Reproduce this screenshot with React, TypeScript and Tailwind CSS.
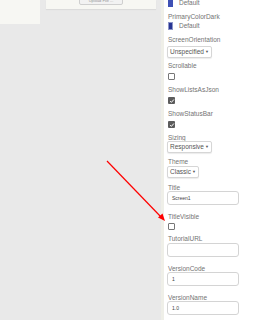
import type { ReactNode } from 'react';

const font = { fontFamily: '"Liberation Sans", Arial, sans-serif' };

function Label({ children }: { children: ReactNode }) {
	return <div className="h-[8px] text-[6.5px] leading-[8px] text-[#737373]">{children}</div>;
}

function Swatch({ color }: { color: string }) {
	return (
		<div className="flex h-[8px] items-center gap-[6px]">
			<span className={`block h-[8px] w-[5px] border border-[#8e96c8] ${color}`} />
			<span className="text-[6.5px] leading-[8px] text-[#737373]">Default</span>
		</div>
	);
}

function Select({ value, width }: { value: string; width: string }) {
	return (
		<div
			className={`flex h-[12px] items-center justify-between rounded-[2px] border border-[#d6d6d6] bg-white pl-[2px] pr-[2px] text-[6.5px] leading-[8px] text-[#555] shadow-[0_1px_1px_rgba(0,0,0,0.08)] ${width}`}
		>
			<span>{value}</span>
			<span className="text-[4px] leading-[4px]">▼</span>
		</div>
	);
}

function Check({ checked }: { checked?: boolean }) {
	return checked ? (
		<span className="flex h-[7px] w-[7px] items-center justify-center rounded-[1px] bg-[#5c5c5c]">
			<svg viewBox="0 0 8 8" className="block h-[6px] w-[6px]">
				<path d="M1.5 4.2 L3.2 5.8 L6.5 2" stroke="#fff" strokeWidth="1.3" fill="none" />
			</svg>
		</span>
	) : (
		<span className="block h-[7px] w-[7px] rounded-[1px] border border-[#777] bg-white" />
	);
}

function TextBox({ value }: { value?: string }) {
	return (
		<div className="flex h-[14px] w-[72px] items-center rounded-[3px] border border-[#d4d4d4] bg-white px-[4px] text-[5px] leading-[6px] text-[#444]">
			{value}
		</div>
	);
}

export default function App() {
	return (
		<div
			className="flex h-[320px] w-[272px] overflow-hidden bg-[#e9e9e9] text-[6.5px] leading-[8px]"
			style={font}
		>
			<div className="relative flex-1">
				<div className="flex items-start gap-[6px]">
					<div className="h-[24px] w-[40px] bg-[#f7f7f3]" />
					<div className="flex h-[9px] w-[110px] items-start justify-center overflow-hidden bg-[#f7f7f3] shadow-[0_1px_1px_rgba(0,0,0,0.06)]">
						<div className="-mt-[3px] flex h-[8px] w-[44px] items-center justify-center rounded-[2px] border border-[#cfcfcf] bg-[#f2f2f2] text-[4px] leading-[4px] text-[#999]">
							Upload File ...
						</div>
					</div>
				</div>
				<svg className="absolute left-[105px] top-[159px]" width="62" height="64" viewBox="0 0 62 64">
					<line x1="2" y1="2" x2="57" y2="59" stroke="#f00" strokeWidth="1.2" />
					<path d="M60 62 L53 58.5 L57.5 54.5 Z" fill="#f00" />
				</svg>
			</div>
			<div className="w-[111px] border-l-[3px] border-[#efefe8] bg-white pl-[4px]">
				<div className="flex flex-col">
					<div className="-mt-[1px] flex h-[8px] items-center gap-[6px]">
						<span className="block h-[7px] w-[5px] bg-[#3f51b5]" />
						<span className="text-[#737373]">Default</span>
					</div>
					<div className="mt-[6px]">
						<Label>PrimaryColorDark</Label>
					</div>
					<div className="mt-[1px]">
						<Swatch color="bg-[#283593]" />
					</div>
					<div className="mt-[6px]">
						<Label>ScreenOrientation</Label>
					</div>
					<div className="-ml-[1px] mt-[2px]">
						<Select value="Unspecified" width="w-[45px]" />
					</div>
					<div className="mt-[4px]">
						<Label>Scrollable</Label>
					</div>
					<div className="mt-[3px]">
						<Check />
					</div>
					<div className="mt-[6px]">
						<Label>ShowListsAsJson</Label>
					</div>
					<div className="mt-[3px]">
						<Check checked />
					</div>
					<div className="mt-[6px]">
						<Label>ShowStatusBar</Label>
					</div>
					<div className="mt-[3px]">
						<Check checked />
					</div>
					<div className="mt-[6px]">
						<Label>Sizing</Label>
					</div>
					<div className="-ml-[1px] -mt-[1px]">
						<Select value="Responsive" width="w-[45px]" />
					</div>
					<div className="mt-[5px]">
						<Label>Theme</Label>
					</div>
					<div className="-ml-[1px] mt-[0px]">
						<Select value="Classic" width="w-[32px]" />
					</div>
					<div className="mt-[6px]">
						<Label>Title</Label>
					</div>
					<div className="-ml-[1px] -mt-[1px]">
						<TextBox value="Screen1" />
					</div>
					<div className="mt-[8px]">
						<Label>TitleVisible</Label>
					</div>
					<div className="mt-[2px]">
						<Check />
					</div>
					<div className="mt-[5px]">
						<Label>TutorialURL</Label>
					</div>
					<div className="-ml-[1px] mt-[0px]">
						<TextBox />
					</div>
					<div className="mt-[8px]">
						<Label>VersionCode</Label>
					</div>
					<div className="-ml-[1px] -mt-[1px]">
						<TextBox value="1" />
					</div>
					<div className="mt-[8px]">
						<Label>VersionName</Label>
					</div>
					<div className="-ml-[1px] -mt-[1px]">
						<TextBox value="1.0" />
					</div>
				</div>
			</div>
		</div>
	);
}
